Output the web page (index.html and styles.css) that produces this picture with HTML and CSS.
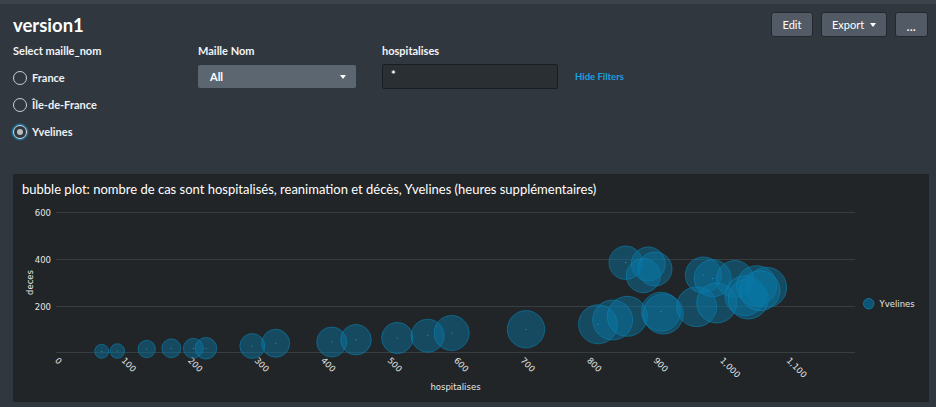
FILE: index.html
```html
<!DOCTYPE html>
<html lang="fr">
<head>
<meta charset="utf-8">
<title>version1</title>
<link rel="stylesheet" href="styles.css">
</head>
<body>
<div class="topbar"></div>
<div class="page">
  <header class="head">
    <h1 class="title">version1</h1>
    <div class="actions">
      <button class="btn btn-edit">Edit</button>
      <button class="btn btn-export">Export <span class="caret"></span></button>
      <button class="btn btn-more">...</button>
    </div>
  </header>

  <section class="filters">
    <div class="field f-radio">
      <div class="field-label">Select maille_nom</div>
      <div class="radio-row"><span class="radio"></span><span class="radio-text">France</span></div>
      <div class="radio-row"><span class="radio"></span><span class="radio-text">Île-de-France</span></div>
      <div class="radio-row"><span class="radio radio-on"></span><span class="radio-text">Yvelines</span></div>
    </div>
    <div class="field f-select">
      <div class="field-label">Maille Nom</div>
      <div class="control">
        <div class="dropdown"><span>All</span><span class="caret"></span></div>
      </div>
    </div>
    <div class="field f-text">
      <div class="field-label">hospitalises</div>
      <div class="control">
        <div class="textinput">*</div>
      </div>
    </div>
    <a class="hide-filters">Hide Filters</a>
  </section>

  <section class="panel">
    <div class="panel-title">bubble plot: nombre de cas sont hospitalisés, reanimation et décès, Yvelines (heures supplémentaires)</div>
    <svg class="chart" width="916" height="205" viewBox="13 198 916 205" xmlns="http://www.w3.org/2000/svg">
      <g class="grid">
        <line x1="56" y1="213.5" x2="855" y2="213.5"/>
        <line x1="56" y1="260.5" x2="855" y2="260.5"/>
        <line x1="56" y1="307.5" x2="855" y2="307.5"/>
        <line x1="56" y1="353.5" x2="855" y2="353.5"/>
      </g>
      <g class="ylabels">
        <text x="51" y="216.5">600</text>
        <text x="51" y="263.5">400</text>
        <text x="51" y="310.5">200</text>
      </g>
      <text class="axis-title" transform="translate(32.5 283.5) rotate(-90)">deces</text>
      <g class="xlabels">
        <text transform="translate(54.5 362) rotate(45)">0</text>
        <text transform="translate(121 362) rotate(45)">100</text>
        <text transform="translate(187.5 362) rotate(45)">200</text>
        <text transform="translate(254 362) rotate(45)">300</text>
        <text transform="translate(320.5 362) rotate(45)">400</text>
        <text transform="translate(387 362) rotate(45)">500</text>
        <text transform="translate(453.5 362) rotate(45)">600</text>
        <text transform="translate(520 362) rotate(45)">700</text>
        <text transform="translate(586.5 362) rotate(45)">800</text>
        <text transform="translate(653 362) rotate(45)">900</text>
        <text transform="translate(719.5 362) rotate(45)">1,000</text>
        <text transform="translate(786 362) rotate(45)">1,100</text>
      </g>
      <text class="axis-title" x="455.5" y="391">hospitalises</text>
      <g class="bubbles">
        <circle cx="101.7" cy="352.3" r="7"/>
        <circle cx="117.3" cy="352" r="7.3"/>
        <circle cx="146.7" cy="350" r="8.7"/>
        <circle cx="171.3" cy="349.3" r="9.5"/>
        <circle cx="193.3" cy="349.3" r="10"/>
        <circle cx="206" cy="349.3" r="10.8"/>
        <circle cx="252.3" cy="347" r="12.5"/>
        <circle cx="275.7" cy="344.3" r="14"/>
        <circle cx="331.7" cy="343" r="15"/>
        <circle cx="356" cy="340.7" r="15.3"/>
        <circle cx="397.3" cy="339" r="15.7"/>
        <circle cx="427.7" cy="336.7" r="16.5"/>
        <circle cx="451.7" cy="334" r="17.5"/>
        <circle cx="526" cy="330.3" r="18.7"/>
        <circle cx="598" cy="325.3" r="19.5"/>
        <circle cx="612.7" cy="321" r="20"/>
        <circle cx="627.3" cy="317.3" r="20"/>
        <circle cx="625.7" cy="263.7" r="16.7"/>
        <circle cx="648.3" cy="265" r="17"/>
        <circle cx="643.3" cy="276.7" r="17"/>
        <circle cx="655" cy="270" r="17"/>
        <circle cx="661" cy="312.7" r="19.5"/>
        <circle cx="663.3" cy="315" r="20"/>
        <circle cx="696.7" cy="307.7" r="20"/>
        <circle cx="703.3" cy="276" r="18"/>
        <circle cx="712.7" cy="279.3" r="18.5"/>
        <circle cx="716.7" cy="304" r="20"/>
        <circle cx="735" cy="280" r="18.5"/>
        <circle cx="745" cy="296.7" r="20"/>
        <circle cx="748.3" cy="300" r="20"/>
        <circle cx="756.7" cy="286.7" r="20"/>
        <circle cx="766.7" cy="288.3" r="20"/>
        <circle cx="760" cy="291.7" r="20"/>
      </g>
      <g class="dots">
        <circle cx="101.7" cy="352.3" r="0.6"/>
        <circle cx="117.3" cy="352" r="0.6"/>
        <circle cx="146.7" cy="350" r="0.6"/>
        <circle cx="171.3" cy="349.3" r="0.6"/>
        <circle cx="193.3" cy="349.3" r="0.6"/>
        <circle cx="206" cy="349.3" r="0.6"/>
        <circle cx="252.3" cy="347" r="0.6"/>
        <circle cx="275.7" cy="344.3" r="0.6"/>
        <circle cx="331.7" cy="343" r="0.6"/>
        <circle cx="356" cy="340.7" r="0.6"/>
        <circle cx="397.3" cy="339" r="0.6"/>
        <circle cx="427.7" cy="336.7" r="0.6"/>
        <circle cx="451.7" cy="334" r="0.6"/>
        <circle cx="526" cy="330.3" r="0.6"/>
        <circle cx="598" cy="325.3" r="0.6"/>
        <circle cx="625.7" cy="263.7" r="0.6"/>
        <circle cx="661" cy="312.7" r="0.6"/>
        <circle cx="703.3" cy="276" r="0.6"/>
        <circle cx="712.7" cy="279.3" r="0.6"/>
      </g>
      <circle class="legend-dot" cx="868.7" cy="304.7" r="5.2"/>
      <text class="legend-text" x="879.5" y="308">Yvelines</text>
    </svg>
  </section>
</div>
</body>
</html>
```

FILE: styles.css
```css
html, body {
  margin: 0;
  padding: 0;
}

body {
  width: 936px;
  height: 407px;
  overflow: hidden;
  background: #31373e;
  color: #ffffff;
  font-family: Lato, "Open Sans", "Liberation Sans", sans-serif;
}

.topbar {
  height: 4px;
  background: #3c434b;
}

.page {
  padding: 0 7px 0 13px;
}

/* header */
.head {
  display: flex;
  justify-content: space-between;
  align-items: flex-start;
  padding-top: 8px;
  height: 25px;
}

.title {
  margin: 1px 0 0;
  font-size: 18.5px;
  line-height: 25px;
  font-weight: 700;
  color: #ffffff;
}

.actions {
  display: flex;
  gap: 8px;
  margin-right: 1px;
}

.btn {
  box-sizing: border-box;
  height: 25px;
  display: flex;
  align-items: center;
  gap: 6px;
  border: 1px solid #23282d;
  border-radius: 3px;
  background: #525b65;
  color: #ffffff;
  font-family: Lato, "Open Sans", sans-serif;
  font-size: 11px;
  padding: 0 11px;
  margin: 0;
}

.btn-edit {
  width: 42px;
  justify-content: center;
  padding: 0;
}

.btn-export {
  width: 66px;
  justify-content: center;
  padding: 0;
}

.btn-more {
  width: 33px;
  justify-content: center;
  padding: 0;
  font-weight: 700;
  letter-spacing: 0.5px;
  padding-top: 3px;
}

.caret {
  display: inline-block;
  width: 0;
  height: 0;
  border-left: 3.5px solid transparent;
  border-right: 3.5px solid transparent;
  border-top: 4px solid #ffffff;
}

/* filters */
.filters {
  display: flex;
  align-items: flex-start;
  margin-top: 7px;
}

.field-label {
  font-size: 11px;
  font-weight: 700;
  line-height: 14px;
  margin-bottom: 6px;
  color: #f2f4f6;
}

.f-radio {
  width: 185px;
}

.radio-row {
  height: 27px;
  display: flex;
  align-items: center;
  gap: 5px;
}

.radio {
  box-sizing: border-box;
  width: 14px;
  height: 14px;
  border-radius: 50%;
  border: 1px solid #c9ced3;
  display: flex;
  align-items: center;
  justify-content: center;
}

.radio-on {
  border-color: #d8dde2;
  box-shadow: 0 0 0 1.5px #1a6f99;
}

.radio-on::after {
  content: "";
  width: 6px;
  height: 6px;
  border-radius: 50%;
  background: #b9bec4;
}

.radio-text {
  font-size: 11px;
  font-weight: 700;
  color: #eef1f4;
}

.f-select {
  width: 184px;
}

.control {
  height: 25px;
  display: flex;
  align-items: center;
}

.dropdown {
  box-sizing: border-box;
  width: 158px;
  height: 23px;
  background: #5c6670;
  border-radius: 2px;
  display: flex;
  align-items: center;
  justify-content: space-between;
  padding: 0 10px 0 12px;
  font-size: 11px;
  font-weight: 700;
  color: #ffffff;
}

.f-text {
  width: 176px;
}

.textinput {
  box-sizing: border-box;
  width: 176px;
  height: 25px;
  background: #2a2f33;
  border: 1px solid #1a1d20;
  border-radius: 2px;
  padding: 3px 0 0 8px;
  font-size: 11px;
  font-weight: 700;
  line-height: 14px;
  color: #ffffff;
}

.hide-filters {
  margin-left: 17px;
  padding-top: 20px;
  line-height: 25px;
  font-size: 9.5px;
  font-weight: 700;
  color: #1a9fe0;
}

/* panel */
.panel {
  margin-top: 29px;
  height: 228px;
  background: #212527;
  display: flex;
  flex-direction: column;
  padding-top: 7px;
  box-sizing: border-box;
}

.panel-title {
  height: 16px;
  line-height: 16px;
  padding-left: 9px;
  font-size: 13px;
  color: #ffffff;
}

.chart {
  display: block;
}

.grid line {
  stroke: #363e42;
  stroke-width: 1;
}

.ylabels text {
  font-family: "DejaVu Sans", sans-serif;
  font-size: 8.5px;
  fill: #e6e6e6;
  text-anchor: end;
}

.xlabels text {
  font-family: "DejaVu Sans", sans-serif;
  font-size: 8.5px;
  fill: #e6e6e6;
}

.axis-title {
  font-family: "DejaVu Sans", sans-serif;
  font-size: 8.5px;
  fill: #e6e6e6;
  text-anchor: middle;
}

.bubbles circle {
  fill: #0877a6;
  fill-opacity: 0.45;
  stroke: #0a86bb;
  stroke-opacity: 0.55;
  stroke-width: 1;
}

.dots circle {
  fill: #2aa6d8;
  fill-opacity: 0.8;
}

.legend-dot {
  fill: #0d5575;
  stroke: #0a77a6;
  stroke-width: 1;
}

.legend-text {
  font-family: "DejaVu Sans", sans-serif;
  font-size: 8.5px;
  fill: #e6e6e6;
}
```
